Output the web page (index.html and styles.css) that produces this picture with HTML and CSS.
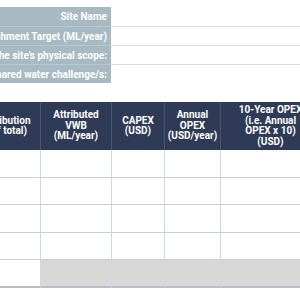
FILE: index.html
```html
<!DOCTYPE html>
<html>
<head>
<meta charset="utf-8">
<link rel="stylesheet" href="styles.css">
</head>
<body>
<div class="page">
  <div class="site">
    <div class="label"><span>Site Name</span></div><div class="value"></div>
    <div class="label"><span>Replenishment Target (ML/year)</span></div><div class="value"></div>
    <div class="label"><span>Describe the site’s physical scope:</span></div><div class="value"></div>
    <div class="label"><span>Describe the shared water challenge/s:</span></div><div class="value"></div>
  </div>
  <div class="costs">
    <div class="hd">Contribution<br>(% of total)</div>
    <div class="hd">Attributed<br>VWB<br>(ML/year)</div>
    <div class="hd">CAPEX<br>(USD)</div>
    <div class="hd">Annual<br>OPEX<br>(USD/year)</div>
    <div class="hd">10-Year OPEX<br>(i.e. Annual<br>OPEX x 10)<br>(USD)</div>

    <div class="cell"></div><div class="cell"></div><div class="cell"></div><div class="cell"></div><div class="cell"></div>
    <div class="cell"></div><div class="cell"></div><div class="cell"></div><div class="cell"></div><div class="cell"></div>
    <div class="cell"></div><div class="cell"></div><div class="cell"></div><div class="cell"></div><div class="cell"></div>
    <div class="cell"></div><div class="cell"></div><div class="cell"></div><div class="cell"></div><div class="cell"></div>
    <div class="cell total"></div><div class="cell total grey"></div><div class="cell total grey"></div><div class="cell total grey"></div><div class="cell total grey"></div>
  </div>
</div>
</body>
</html>
```
FILE: styles.css
```css
html, body {
  margin: 0;
  padding: 0;
  background: #ffffff;
  overflow: hidden;
}
body {
  font-family: Roboto, "Liberation Sans", sans-serif;
  font-size: 10px;
  font-weight: 700;
  color: #ffffff;
}
.page {
  margin-left: -35px;
  padding-top: 7px;
  width: 370px;
}
.site {
  display: grid;
  grid-template-columns: 146px 1fr;
  grid-auto-rows: 19px;
}
.label {
  background: #a7bac4;
  display: flex;
  align-items: center;
  justify-content: flex-end;
  padding-right: 4px;
  white-space: nowrap;
}
.label span {
  flex-shrink: 0;
}
.label, .value {
  box-sizing: border-box;
}
.label:nth-child(n+3) {
  border-top: 1px solid #b8c8d0;
}
.value:nth-child(n+3) {
  border-top: 1px solid #d7dce2;
}
.costs {
  margin-top: 19px;
  display: grid;
  grid-template-columns: 76px 71px 53px 56px 100px;
  grid-template-rows: 48px repeat(5, 27.5px);
}
.hd {
  background: #2f3b56;
  border-right: 1px solid #4b5771;
  display: flex;
  align-items: center;
  justify-content: center;
  text-align: center;
  line-height: 10.5px;
}
.cell {
  box-sizing: border-box;
  border-right: 1px solid #cfdadf;
  border-bottom: 1px solid #c7ced6;
}
.total {
  border-bottom: 2px solid #b7bec8;
}
.grey {
  background: #d9d8d6;
}
```
